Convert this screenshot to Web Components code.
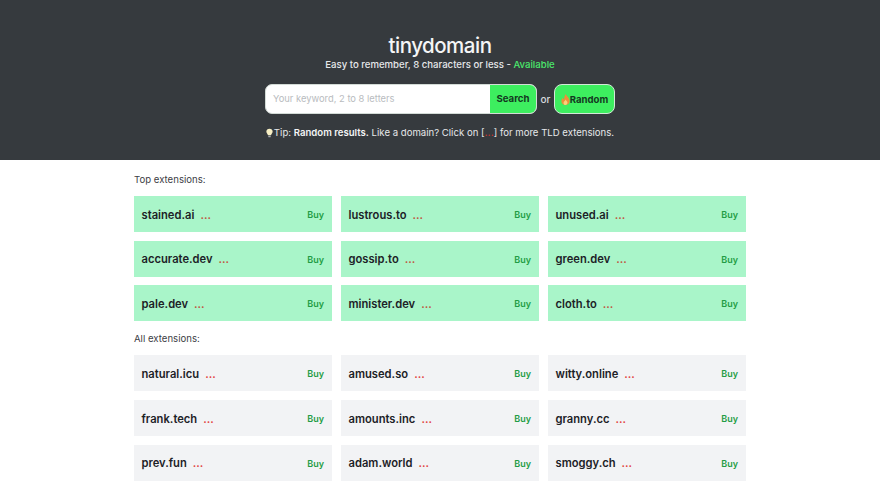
<!DOCTYPE html>
<html lang="en">
<head>
<meta charset="utf-8">
<title>tinydomain</title>
<style>
  html, body { margin: 0; padding: 0; background: #fff; }
  body { font-family: Inter, "Liberation Sans", sans-serif; overflow: hidden; }
</style>
</head>
<body>
<site-header></site-header>
<main-list>
  <domain-group label="Top extensions:" top>
    <domain-card name="stained.ai"></domain-card>
    <domain-card name="lustrous.to"></domain-card>
    <domain-card name="unused.ai"></domain-card>
    <domain-card name="accurate.dev"></domain-card>
    <domain-card name="gossip.to"></domain-card>
    <domain-card name="green.dev"></domain-card>
    <domain-card name="pale.dev"></domain-card>
    <domain-card name="minister.dev"></domain-card>
    <domain-card name="cloth.to"></domain-card>
  </domain-group>
  <domain-group label="All extensions:">
    <domain-card name="natural.icu"></domain-card>
    <domain-card name="amused.so"></domain-card>
    <domain-card name="witty.online"></domain-card>
    <domain-card name="frank.tech"></domain-card>
    <domain-card name="amounts.inc"></domain-card>
    <domain-card name="granny.cc"></domain-card>
    <domain-card name="prev.fun"></domain-card>
    <domain-card name="adam.world"></domain-card>
    <domain-card name="smoggy.ch"></domain-card>
  </domain-group>
</main-list>
<script>
class SiteHeader extends HTMLElement {
  connectedCallback() {
    this.attachShadow({ mode: 'open' });
    this.shadowRoot.innerHTML = `
      <style>
        :host {
          display: flex;
          flex-direction: column;
          align-items: center;
          height: 160px;
          box-sizing: border-box;
          padding-top: 33px;
          background: #363a3e;
          color: #e6e8ea;
        }
        h1 {
          margin: 0;
          font-size: 20.5px;
          line-height: 26px;
          font-weight: 500;
          letter-spacing: -0.5px;
          color: #f4f5f6;
        }
        .sub {
          font-size: 9.6px;
          line-height: 12px;
          font-weight: 500;
        }
        .sub span { color: #4be86c; }
        .row {
          display: flex;
          align-items: center;
          margin-top: 13px;
          font-size: 10px;
          font-weight: 500;
        }
        .search {
          display: flex;
          width: 272px;
          height: 30px;
          box-sizing: border-box;
          border: 1.5px solid #d3dbd6;
          border-radius: 7px;
          overflow: hidden;
          background: #fff;
        }
        .search .ph {
          flex: 1;
          padding-left: 7px;
          line-height: 27px;
          font-size: 9.4px;
          font-weight: 400;
          color: #b9bcc0;
        }
        .search .go {
          width: 46px;
          background: #3dee5f;
          color: #14391f;
          font-weight: 700;
          text-align: center;
          line-height: 27px;
          font-size: 9.6px;
        }
        .or { width: 17px; text-align: center; color: #d8dadd; }
        .random {
          display: flex;
          align-items: center;
          justify-content: center;
          width: 61px;
          height: 30px;
          box-sizing: border-box;
          border: 1.5px solid #d3e8d8;
          border-radius: 8px;
          background: #3dee5f;
          color: #14391f;
          font-weight: 700;
          font-size: 9.6px;
        }
        .tip {
          display: flex;
          align-items: center;
          margin-top: 12px;
          font-size: 9.6px;
          line-height: 14px;
          white-space: pre;
        }
        .tip b { font-weight: 600; color: #f4f5f6; }
        .tip i { font-style: normal; font-weight: 600; color: #c4352f; }
        svg { display: block; flex: none; }
      </style>
      <h1>tinydomain</h1>
      <div class="sub">Easy to remember, 8 characters or less - <span>Available</span></div>
      <div class="row">
        <div class="search">
          <div class="ph">Your keyword, 2 to 8 letters</div>
          <div class="go">Search</div>
        </div>
        <div class="or">or</div>
        <div class="random">
          <svg width="9" height="11" viewBox="0 0 9 11">
            <path d="M4.800 0C5.200 2 8.600 3.600 8.600 7c0 2.400-1.900 4-4.100 4S.4 9.400.4 7.200C.4 5.600 1.300 4.400 2 3.800c0 1 .4 1.600 1 1.800C3.200 3.600 3.600 1.400 4.800 0z" fill="#ee8f3a"/>
            <path d="M4.600 5.500c.3 1 1.900 1.800 1.900 3.300 0 1.200-.9 2.200-2 2.200s-2-1-2-2.100c0-1.300 1.600-2 2.100-3.400z" fill="#f8d27a"/>
          </svg><span>Random</span>
        </div>
      </div>
      <div class="tip">
        <svg width="7" height="10" viewBox="0 0 8 10" style="margin-right:1px">
          <path d="M4 0C1.800 0 .4 1.500.4 3.400c0 1.600 1.300 2.500 1.900 4.200h3.400c.6-1.700 1.900-2.600 1.900-4.200C7.600 1.500 6.200 0 4 0z" fill="#f7efc4"/>
          <rect x="2.600" y="8" width="2.800" height="1.800" rx=".6" fill="#a9acb0"/>
        </svg><span>Tip: <b>Random results.</b> Like a domain? Click on [<i>...</i>] for more TLD extensions.</span>
      </div>
    `;
  }
}

class MainList extends HTMLElement {
  connectedCallback() {
    this.attachShadow({ mode: 'open' });
    this.shadowRoot.innerHTML = `
      <style>
        :host {
          display: flex;
          flex-direction: column;
          width: 612px;
          margin: 0 auto;
          padding-top: 14px;
        }
      </style>
      <slot></slot>
    `;
  }
}

class DomainGroup extends HTMLElement {
  connectedCallback() {
    this.attachShadow({ mode: 'open' });
    this.shadowRoot.innerHTML = `
      <style>
        :host {
          display: block;
          margin-bottom: 12px;
          --card-bg: ${this.hasAttribute('top') ? '#a9f5c9' : '#f2f3f5'};
          --dots: ${this.hasAttribute('top') ? '#c0553f' : '#e2443f'};
        }
        .label {
          font-size: 9.6px;
          line-height: 12px;
          color: #3d4045;
          margin-bottom: 10px;
        }
        .grid {
          display: grid;
          grid-template-columns: repeat(3, 198px);
          column-gap: 9px;
          row-gap: 8.700px;
        }
      </style>
      <div class="label">${this.getAttribute('label')}</div>
      <div class="grid"><slot></slot></div>
    `;
  }
}

class DomainCard extends HTMLElement {
  connectedCallback() {
    this.attachShadow({ mode: 'open' });
    this.shadowRoot.innerHTML = `
      <style>
        :host {
          display: flex;
          align-items: center;
          height: 36px;
          box-sizing: border-box;
          padding: 1px 8px 0 7.500px;
          background: var(--card-bg);
        }
        .name {
          font-size: 11.200px;
          font-weight: 600;
          color: #1c2126;
        }
        .dots {
          margin-left: 6px;
          font-size: 11px;
          font-weight: 600;
          color: var(--dots);
        }
        .buy {
          margin-left: auto;
          font-size: 9px;
          font-weight: 600;
          color: #1f9d45;
        }
      </style>
      <span class="name">${this.getAttribute('name')}</span>
      <span class="dots">...</span>
      <span class="buy">Buy</span>
    `;
  }
}

customElements.define('site-header', SiteHeader);
customElements.define('main-list', MainList);
customElements.define('domain-group', DomainGroup);
customElements.define('domain-card', DomainCard);
</script>
</body>
</html>
